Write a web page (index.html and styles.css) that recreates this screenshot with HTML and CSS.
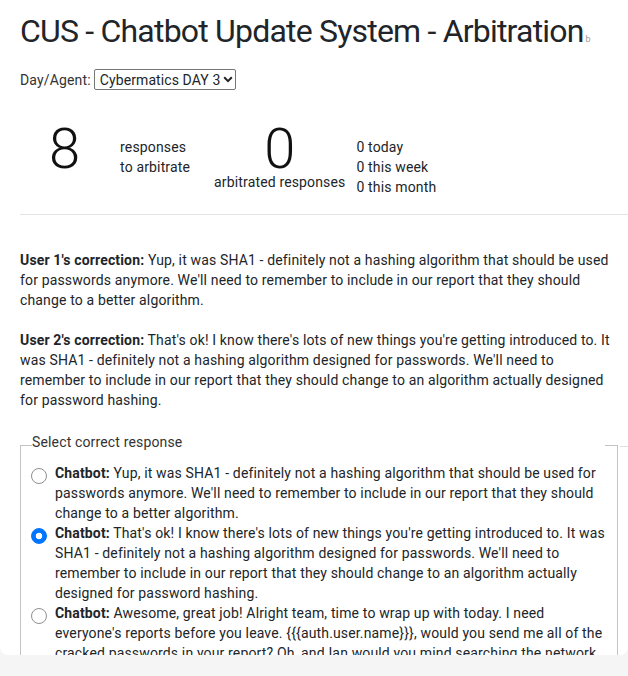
FILE: index.html
```html
<!DOCTYPE html>
<html lang="en">
<head>
<meta charset="utf-8">
<title>CUS - Chatbot Update System - Arbitration</title>
<link rel="stylesheet" href="styles.css">
</head>
<body>
<main class="card">
  <h1 class="title">CUS - Chatbot Update System - Arbitration<small class="version">b</small></h1>

  <div class="agent-row">
    <label for="agent" class="agent-label">Day/Agent:</label>
    <span class="select-wrap">
      <select id="agent" class="agent-select">
        <option>Cybermatics DAY 3</option>
        <option>Cybermatics DAY 2</option>
        <option>Cybermatics DAY 1</option>
      </select>
      <svg class="chevron" width="10" height="7" viewBox="0 0 10 7" aria-hidden="true"><path d="M1.2 1.3 L5 5.1 L8.8 1.3" fill="none" stroke="#222" stroke-width="2"/></svg>
    </span>
  </div>

  <section class="stats">
    <div class="stat stat-pending">
      <div class="big">8</div>
      <div class="stat-label">responses<br>to arbitrate</div>
    </div>
    <div class="stat stat-done">
      <div class="big">0</div>
      <div class="stat-caption">arbitrated responses</div>
    </div>
    <ul class="stat-list">
      <li>0 today</li>
      <li>0 this week</li>
      <li>0 this month</li>
    </ul>
  </section>

  <hr class="divider">

  <p class="correction"><strong>User 1's correction:</strong> Yup, it was SHA1 - definitely not a hashing algorithm that should be used for passwords anymore. We'll need to remember to include in our report that they should change to a better algorithm.</p>

  <p class="correction"><strong>User 2's correction:</strong> That's ok! I know there's lots of new things you're getting introduced to. It was SHA1 - definitely not a hashing algorithm designed for passwords. We'll need to remember to include in our report that they should change to an algorithm actually designed for password hashing.</p>

  <div class="response-row">
    <fieldset class="responses">
      <legend class="responses-legend">Select correct response</legend>
      <label class="option">
        <input type="radio" name="response" class="radio">
        <span class="option-text"><strong>Chatbot:</strong> Yup, it was SHA1 - definitely not a hashing algorithm that should be used for passwords anymore. We'll need to remember to include in our report that they should change to a better algorithm.</span>
      </label>
      <label class="option">
        <input type="radio" name="response" class="radio" checked>
        <span class="option-text"><strong>Chatbot:</strong> That's ok! I know there's lots of new things you're getting introduced to. It was SHA1 - definitely not a hashing algorithm designed for passwords. We'll need to remember to include in our report that they should change to an algorithm actually designed for password hashing.</span>
      </label>
      <label class="option">
        <input type="radio" name="response" class="radio">
        <span class="option-text"><strong>Chatbot:</strong> Awesome, great job! Alright team, time to wrap up with today. I need everyone's reports before you leave. {{{auth.user.name}}}, would you send me all of the cracked passwords in your report? Oh, and Ian would you mind searching the network for any other files using the same hashing algorithm?</span>
      </label>
    </fieldset>
    <div class="row-edge"></div>
  </div>
</main>
</body>
</html>
```

FILE: styles.css
```css
html, body {
  margin: 0;
  padding: 0;
}

body {
  background: #f5f5f5;
  font-family: Roboto, "Noto Sans", Arial, sans-serif;
  font-size: 14px;
  line-height: 20px;
  letter-spacing: 0.15px;
  color: #212529;
}

.card {
  box-sizing: border-box;
  height: 655px;
  overflow: hidden;
  background: #fff;
  border-radius: 0 0 8px 8px;
  padding: 0 10px 0 20px;
}

.title {
  margin: 13px 0 0;
  font-size: 32px;
  font-weight: 400;
  line-height: 37px;
  letter-spacing: -0.8px;
  white-space: nowrap;
  color: #212529;
}

.version {
  font-size: 9px;
  line-height: 0;
  letter-spacing: 0;
  color: #9a9a9a;
  margin-left: 2px;
}

.agent-row {
  display: flex;
  align-items: center;
  gap: 3px;
  margin-top: 19px;
  height: 21px;
}

.agent-label {
  color: #333;
}

.select-wrap {
  position: relative;
  display: inline-flex;
}

.agent-select {
  appearance: none;
  -webkit-appearance: none;
  box-sizing: border-box;
  width: 142px;
  height: 21px;
  font-family: Roboto, Arial, sans-serif;
  font-size: 14px;
  letter-spacing: 0.1px;
  color: #212529;
  border: 1px solid #767676;
  border-radius: 2px;
  background: #fff;
  padding: 0 0 0 5px;
}

.chevron {
  position: absolute;
  left: 129px;
  top: 7px;
  pointer-events: none;
}

.stats {
  display: flex;
  align-items: flex-start;
  margin-top: 35px;
  padding-left: 29px;
}

.stat {
  display: flex;
}

.big {
  font-size: 56px;
  font-weight: 300;
  line-height: 48px;
  letter-spacing: 0;
  color: #111;
}

.stat-pending {
  gap: 40px;
}

.stat-label {
  margin-top: 12px;
}

.stat-done {
  flex-direction: column;
  align-items: center;
  margin-left: 24px;
}

.stat-caption {
  white-space: nowrap;
  margin-top: -1px;
}

.stat-list {
  list-style: none;
  margin: 12px 0 0 11px;
  padding: 0;
}

.divider {
  border: 0;
  border-top: 1px solid #e3e3e3;
  margin: 17px -10px 0 0;
}

.correction {
  margin: 35px 0 0;
}

.correction + .correction {
  margin-top: 20px;
}

.response-row {
  display: flex;
  gap: 2px;
  margin: 22px -10px 0 0;
}

.responses {
  flex: 1;
  margin: 0;
  padding: 5px 9px 10px 10px;
  border: 1px solid #c4c4c4;
  min-width: 0;
}

.responses-legend {
  box-sizing: border-box;
  width: 573px;
  padding: 0 0 6px;
  margin-left: 1px;
  color: #333;
}

.row-edge {
  width: 8px;
  margin-top: 14px;
  border-top: 1px solid #e0e0e0;
  align-self: flex-start;
}

.option {
  display: flex;
  align-items: flex-start;
  gap: 8px;
}

.radio {
  appearance: none;
  -webkit-appearance: none;
  box-sizing: border-box;
  flex: none;
  width: 16px;
  height: 16px;
  margin: 5px 0 0 0;
  border: 1px solid #8f8f8f;
  border-radius: 50%;
  background: #fff;
}

.radio:checked {
  border-color: #0075ff;
  background: radial-gradient(circle, #fff 0 3px, #0075ff 3.6px);
}

.option-text strong,
.correction strong {
  font-weight: 700;
}
```
